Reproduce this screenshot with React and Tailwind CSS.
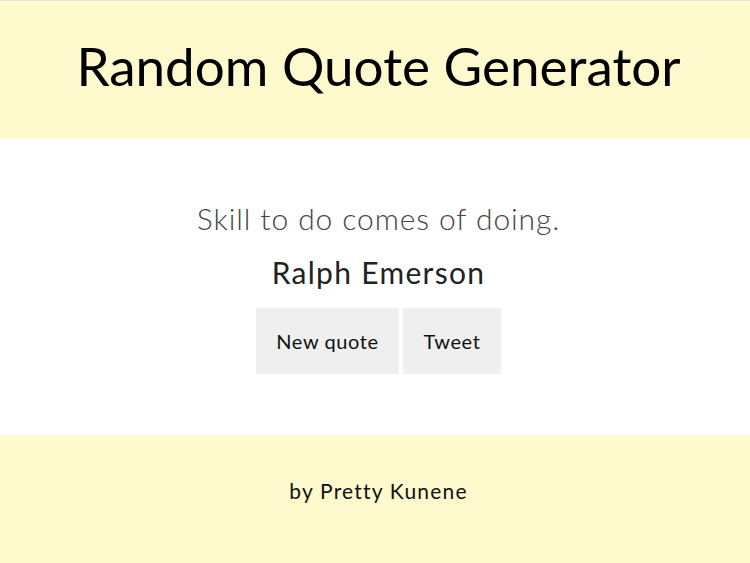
export default function App() {
  const font = { fontFamily: '"Lato", "Open Sans", sans-serif' };
  return (
    <div className="w-[750px] h-[563px] flex flex-col bg-white border-t border-[#e3e3e3]" style={font}>
      <header className="h-[138px] bg-[#fffacd] flex items-center justify-center pl-[7px] pb-[10px]">
        <h1 className="text-[53px] leading-none text-black font-normal tracking-[0px]">Random Quote Generator</h1>
      </header>
      <main className="h-[296px] flex flex-col items-center pt-[59px] pl-[7px]">
        <p className="text-[30px] leading-[40px] font-light text-[#444] tracking-[0.9px]">Skill to do comes of doing.</p>
        <p className="mt-[14px] text-[30px] leading-[40px] font-normal text-[#222] tracking-[1.3px]">Ralph Emerson</p>
        <div className="mt-[16px] flex gap-[4px]">
          <button className="w-[143px] h-[66px] bg-[#efefef] text-[20px] text-[#111] tracking-[0.6px]">New quote</button>
          <button className="w-[98px] h-[66px] bg-[#efefef] text-[20px] text-[#111] tracking-[0.6px]">Tweet</button>
        </div>
      </main>
      <footer className="flex-1 bg-[#fffacd] flex justify-center pt-[41px] pl-[7px]">
        <p className="text-[21px] leading-[30px] text-[#111] tracking-[1.2px]">by Pretty Kunene</p>
      </footer>
    </div>
  );
}
